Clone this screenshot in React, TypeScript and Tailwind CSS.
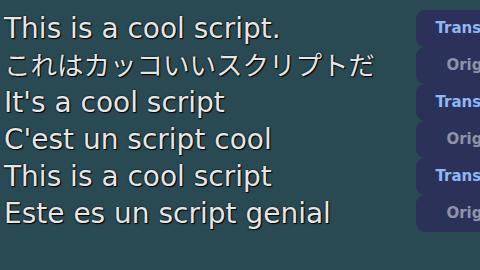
import React from "react";

const rows: { text: string; kind: "t" | "o"; jp?: boolean }[] = [
  { text: "This is a cool script.", kind: "t" },
  { text: "これはカッコいいスクリプトだ", kind: "o", jp: true },
  { text: "It's a cool script", kind: "t" },
  { text: "C'est un script cool", kind: "o" },
  { text: "This is a cool script", kind: "t" },
  { text: "Este es un script genial", kind: "o" },
];

export default function App() {
  return (
    <div className="w-[480px] h-[270px] overflow-hidden bg-[#2a4a53] pt-[10px]">
      <div className="flex flex-col">
        {rows.map((r, i) => (
          <div key={i} className="flex h-[37px] items-stretch">
            <div
              className={
                "w-[416px] shrink-0 pl-[4px] pt-[1px] leading-[36px] text-[#e6e6e6] whitespace-nowrap font-['DejaVu_Sans','Noto_Sans_CJK_JP',sans-serif] [text-shadow:0_0_2px_#000,1px_1px_1px_#000] " +
                (r.jp ? "text-[26.5px]" : "text-[28px]")
              }
            >
              {r.text}
            </div>
            <div className="w-[128px] shrink-0 rounded-[9px] bg-[#2b3158] flex items-center justify-center">
              <span
                className={
                  "text-[15px] font-bold whitespace-nowrap font-['DejaVu_Sans',sans-serif] " +
                  (r.kind === "t" ? "text-[#8fb8f6]" : "text-[#8e93a8]")
                }
              >
                {r.kind === "t" ? "Translated" : "Original"}
              </span>
            </div>
          </div>
        ))}
      </div>
    </div>
  );
}
